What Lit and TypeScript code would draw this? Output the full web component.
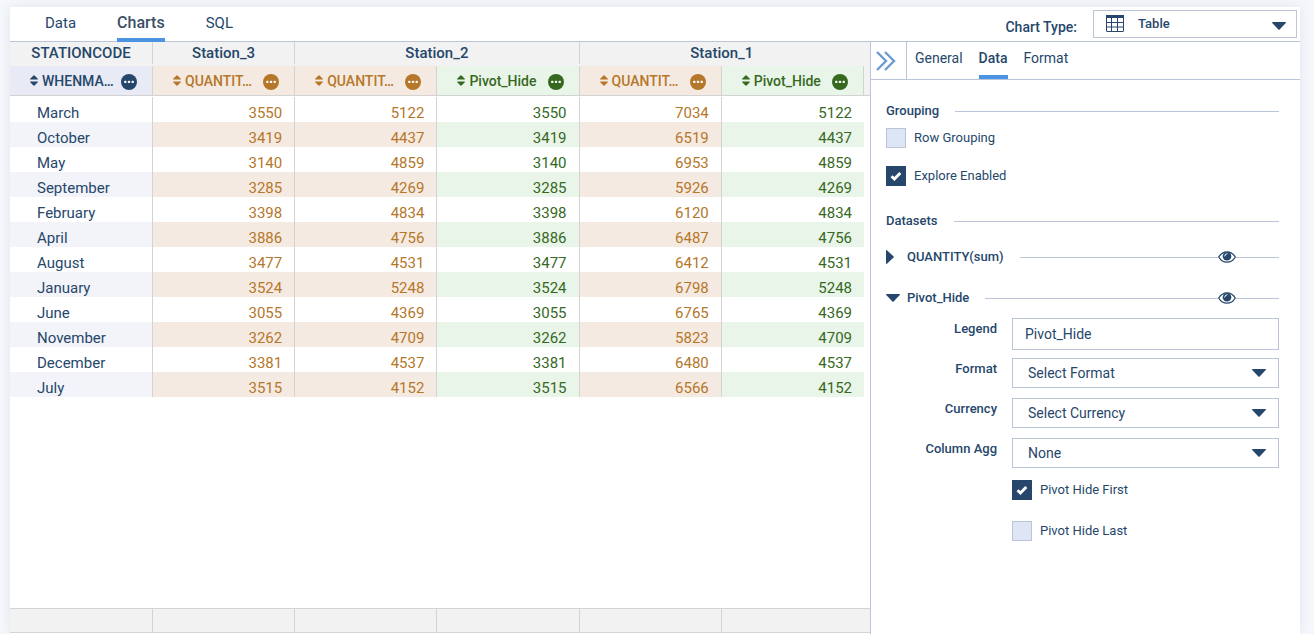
import { LitElement, html, svg, css } from "lit";
import { customElement } from "lit/decorators.js";
import { classMap } from "lit/directives/class-map.js";

type Tone = "navy" | "orange" | "green";

const columns: { label: string; tone: Tone }[] = [
  { label: "WHENMA…", tone: "navy" },
  { label: "QUANTIT…", tone: "orange" },
  { label: "QUANTIT…", tone: "orange" },
  { label: "Pivot_Hide", tone: "green" },
  { label: "QUANTIT…", tone: "orange" },
  { label: "Pivot_Hide", tone: "green" },
];

const rows: [string, number, number, number][] = [
  ["March", 3550, 5122, 7034],
  ["October", 3419, 4437, 6519],
  ["May", 3140, 4859, 6953],
  ["September", 3285, 4269, 5926],
  ["February", 3398, 4834, 6120],
  ["April", 3886, 4756, 6487],
  ["August", 3477, 4531, 6412],
  ["January", 3524, 5248, 6798],
  ["June", 3055, 4369, 6765],
  ["November", 3262, 4709, 5823],
  ["December", 3381, 4537, 6480],
  ["July", 3515, 4152, 6566],
];

const caret = html`<svg class="caret" width="14" height="8" viewBox="0 0 14 8" aria-hidden="true">
  <path d="M.6 0h12.800c.5 0 .7.5.4.9L7.600 7.600a.8.8 0 0 1-1.200 0L.2.9C-.1.5.1 0 .6 0z" fill="currentColor" />
</svg>`;

const eye = html`<svg width="18" height="12" viewBox="0 0 18 12" aria-hidden="true">
  <path d="M.7 6C2.800 2.500 5.700.8 9 .8S15.200 2.500 17.300 6C15.200 9.500 12.300 11.200 9 11.200S2.800 9.500.7 6z" fill="#fff" stroke="currentColor" stroke-width="1.300" />
  <circle cx="9" cy="5.200" r="4.300" fill="currentColor" />
  <path d="M6.700 5a2.400 2.400 0 0 1 2.300-2.300" fill="none" stroke="#fff" stroke-width="1" stroke-linecap="round" />
</svg>`;

@customElement("app-root")
export class AppRoot extends LitElement {
  static styles = css`
    :host {
      display: block;
      height: 100vh;
      box-sizing: border-box;
      padding: 7px 14px 0 10px;
      overflow: hidden;
      background: #f5f7fb;
      color: #26476b;
      font: 13px/20px Roboto, "Liberation Sans", sans-serif;
    }
    *, *::before { box-sizing: border-box; }
    button, input, select {
      margin: 0;
      padding: 0;
      border: 0;
      border-radius: 0;
      background: none;
      color: inherit;
      font: inherit;
    }
    svg { display: block; flex: none; }
    .card {
      height: 100%;
      display: flex;
      flex-direction: column;
      background: #fff;
      box-shadow: 0 0 10px #dfe4ec;
    }
    .topbar {
      display: flex;
      justify-content: space-between;
      height: 35px;
      flex: none;
      padding: 0 3px 0 35px;
      border-bottom: 1px solid #bcc4da;
    }
    .tabs { display: flex; gap: 41px; }
    .tab {
      padding-bottom: 4px;
      font-size: 15px;
      line-height: 30px;
      border-bottom: 4px solid transparent;
    }
    .tabs .tab { height: 35px; padding: 0; line-height: 28px; }
    .tab.on { font-weight: 500; border-color: #4a94e2; }
    .tabs .on { color: #3c4f66; font-size: 16px; }
    .type { display: flex; gap: 16px; padding-top: 3px; }
    .type-label { padding-top: 7px; font-size: 14px; font-weight: 500; }
    .picker { display: grid; align-items: center; border: 1px solid #bcc4da; }
    .picker > * { grid-area: 1 / 1; }
    .picker select {
      width: 100%;
      height: 28px;
      padding: 0 32px 0 15px;
      appearance: none;
      font-size: 14px;
    }
    .picker .caret { justify-self: end; margin-right: 12px; pointer-events: none; }
    .type .picker { width: 204px; height: 28px; }
    .type select { height: 26px; padding-left: 44px; font-size: 13px; font-weight: 500; }
    .type .grid-icon { margin: 0 0 2px 12px; pointer-events: none; }
    .type .caret { margin: 4px 10px 0 0; }
    .body { flex: 1; min-height: 0; display: flex; }
    .sheet { flex: 1; min-width: 0; display: flex; flex-direction: column; padding-bottom: 1px; }
    table { width: 100%; table-layout: fixed; border-collapse: separate; border-spacing: 0; }
    th, td { padding: 0; font-weight: 400; }
    .first { width: 143px; }
    .edge { width: 6px; }
    .group { height: 24px; padding-bottom: 2px; background: #f2f2f2; }
    .group span {
      display: block;
      height: 22px;
      border-right: 1px solid #d3d3d3;
      font-size: 15px;
      font-weight: 500;
      line-height: 22px;
    }
    .group.last span { border: 0; }
    .rail { background: #f2f2f2; }
    .rail.low { border-bottom: 1px solid #d3d3d3; }
    .field { height: 30px; border-right: 1px solid #d3d3d3; border-bottom: 1px solid #d3d3d3; }
    .field-in { display: flex; align-items: center; padding: 0 15px 0 20px; }
    .name { flex: 1; padding-left: 4px; text-align: left; font-size: 14px; font-weight: 500; white-space: nowrap; }
    .more { margin-top: 3px; }
    .navy { color: #26476b; }
    .orange { color: #b5772a; }
    .green { color: #36691f; }
    .field.navy { background: #e8ebf5; }
    .field.orange { background: #f5eae1; }
    .field.green { background: #eaf5e9; }
    .gap td { height: 1px; }
    .cell {
      height: 25px;
      padding: 7px 12px 0 0;
      border-right: 1px solid #d3d3d3;
      text-align: right;
      font-size: 15px;
      line-height: 18px;
    }
    .cell.navy { padding: 7px 0 0 27px; text-align: left; }
    .cell.end { border: 0; }
    tr:nth-child(odd) > .cell.navy { background: #f2f4f9; }
    tr:nth-child(odd) > .cell.orange { background: #f5eae1; }
    tr:nth-child(odd) > .cell.green { background: #eaf5e9; }
    .totals {
      display: grid;
      grid-template-columns: 143px repeat(5, 1fr);
      margin-top: auto;
      height: 25px;
      padding-right: 6px;
      background: #f2f2f2;
      border: solid #d3d3d3;
      border-width: 1px 0;
    }
    .totals span { border-right: 1px solid #d3d3d3; }
    .totals span:last-child { border: 0; }
    .panel { flex: 0 0 430px; border-left: 1px solid #bcc4da; }
    .panel-head { display: flex; height: 38px; border-bottom: 1px solid #bcc4da; }
    .collapse { width: 36px; padding-left: 5px; border-right: 1px solid #bcc4da; color: #6c9bd0; }
    .subtabs { display: flex; gap: 16px; padding-left: 8px; }
    .subtabs .tab { height: 37px; padding: 0 0 1px; font-size: 14px; line-height: 32px; }
    .subtabs .tab.on { color: #26476b; }
    .content { padding: 21px 21px 0 15px; }
    .heading { display: flex; align-items: center; gap: 16px; margin: 0; font: inherit; font-weight: 500; }
    .heading::after { content: ""; flex: 1; height: 1px; background: #bcc4da; }
    .check { display: flex; align-items: center; gap: 8px; height: 20px; }
    .check input {
      width: 20px;
      height: 20px;
      appearance: none;
      background: #dee5f5;
      border: 1px solid #bcc4da;
    }
    .box { display: grid; place-items: center; }
    .box > * { grid-area: 1 / 1; }
    .box svg { pointer-events: none; }
    .check input:checked { background: #26476b; border-color: #26476b; }
    .options { display: grid; gap: 18px; padding: 7px 0 25px; }
    .dataset { display: flex; align-items: center; font-weight: 500; height: 20px; }
    .toggle { display: flex; align-items: center; font-weight: 500; }
    .arrow { width: 21px; }
    .rule { height: 1px; background: #bcc4da; }
    .rule.lead { flex: 1; margin-left: 16px; }
    .rule.tail { width: 43px; }
    .datasets { display: grid; gap: 21px; padding-top: 16px; }
    .form { display: grid; grid-template-columns: 111px 1fr; gap: 8px 15px; padding-top: 10px; }
    .form > label:not(.check) { padding-top: 1px; text-align: right; font-weight: 500; }
    .form input[type="text"] {
      width: 100%;
      height: 32px;
      padding: 0 12px;
      border: 1px solid #bcc4da;
      font-size: 14px;
    }
    .form .picker { height: 30px; margin-bottom: 2px; }
    .form .check { grid-column: 2; margin: 2px 0 11px; }
  `;

  private check(label: string, checked: boolean) {
    return html`<label class="check">
      <span class="box">
        <input type="checkbox" .checked=${checked} />
        ${checked
          ? html`<svg width="12" height="10" viewBox="0 0 12 10" aria-hidden="true">
              <path d="M1.500 5.300 4.400 8 10.300 2" fill="none" stroke="#fff" stroke-width="2.900" />
            </svg>`
          : null}
      </span>
      ${label}
    </label>`;
  }

  private select(id: string, label: string, value: string) {
    return html`<label for=${id}>${label}</label>
      <div class="picker">
        <select id=${id}><option>${value}</option></select>
        ${caret}
      </div>`;
  }

  private dataset(name: string, open: boolean) {
    return html`<div class="dataset">
      <button class="toggle" aria-expanded=${open}>
        <span class="arrow">
          ${open
            ? caret
            : html`<svg width="8" height="14" viewBox="0 0 8 14" aria-hidden="true">
                <path d="M0 .6v12.800c0 .5.5.7.9.4l6.700-6.200a.8.8 0 0 0 0-1.200L.9.2C.5-.1 0 .1 0 .6z" fill="currentColor" />
              </svg>`}
        </span>
        ${name}
      </button>
      <span class="rule lead"></span>
      <button aria-label="Toggle visibility">${eye}</button>
      <span class="rule tail"></span>
    </div>`;
  }

  private header(label: string, tone: Tone) {
    return html`<th scope="col" class="field ${tone}">
      <div class="field-in">
        <svg width="8" height="11" viewBox="0 0 8 11" aria-hidden="true">
          <path d="M.6 4.600h6.800c.5 0 .7-.5.4-.8L4.500.4a.7.7 0 0 0-1 0L.2 3.800c-.3.300-.1.8.4.8zM.6 6.400h6.800c.5 0 .7.5.4.8L4.500 10.600a.7.7 0 0 1-1 0L.2 7.200c-.3-.300-.1-.8.4-.8z" fill="currentColor" />
        </svg>
        <span class="name">${label}</span>
        <button class="more" aria-label="Column options">
          <svg width="16" height="16" viewBox="0 0 16 16" aria-hidden="true">
            <circle cx="8" cy="8" r="8" fill="currentColor" />
            ${[4.3, 8, 11.7].map((x) => svg`<rect x=${x - 1.2} y="6.700" width="2.400" height="2.400" rx=".8" fill="#fff" />`)}
          </svg>
        </button>
      </div>
    </th>`;
  }

  private table() {
    return html`<table>
      <colgroup><col class="first" /><col span="5" /><col class="edge" /></colgroup>
      <thead>
        <tr>
          <th class="group"><span>STATIONCODE</span></th>
          <th class="group"><span>Station_3</span></th>
          <th class="group" colspan="2"><span>Station_2</span></th>
          <th class="group last" colspan="2"><span>Station_1</span></th>
          <td class="rail"></td>
        </tr>
        <tr>
          ${columns.map((c) => this.header(c.label, c.tone))}
          <td class="rail low"></td>
        </tr>
      </thead>
      <tbody>
        <tr class="gap"><td colspan="7"></td></tr>
        ${rows.map(([month, a, b, c]) => {
          const values = [month, a, b, a, c, b];
          return html`<tr>
            ${values.map(
              (v, i) => html`<td class=${classMap({ cell: true, [columns[i].tone]: true, end: i === 5 })}>${v}</td>`
            )}
          </tr>`;
        })}
      </tbody>
    </table>`;
  }

  render() {
    return html`<main class="card">
      <header class="topbar">
        <nav class="tabs">
          <button class="tab">Data</button>
          <button class="tab on">Charts</button>
          <button class="tab">SQL</button>
        </nav>
        <div class="type">
          <label class="type-label" for="type">Chart Type:</label>
          <div class="picker">
            <select id="type"><option>Table</option></select>
            <svg class="grid-icon" width="18" height="17" viewBox="0 0 18 17" aria-hidden="true">
              <rect x=".5" y=".5" width="17" height="16" rx=".5" fill="#fff" stroke="currentColor" />
              <path d="M0 0h18v3H0z" fill="currentColor" />
              <path d="M5.500 3v14M11.500 3v14M0 7.500h18M0 12h18" stroke="currentColor" />
            </svg>
            ${caret}
          </div>
        </div>
      </header>
      <div class="body">
        <section class="sheet">
          ${this.table()}
          <div class="totals">${columns.map(() => html`<span></span>`)}</div>
        </section>
        <aside class="panel">
          <div class="panel-head">
            <button class="collapse" aria-label="Collapse panel">
              <svg width="20" height="20" viewBox="0 0 20 20" aria-hidden="true">
                <path d="M1 1l9 9-9 9M9 1l9 9-9 9" fill="none" stroke="currentColor" stroke-width="2.400" />
              </svg>
            </button>
            <nav class="subtabs">
              <button class="tab">General</button>
              <button class="tab on">Data</button>
              <button class="tab">Format</button>
            </nav>
          </div>
          <div class="content">
            <h2 class="heading">Grouping</h2>
            <div class="options">
              ${this.check("Row Grouping", false)} ${this.check("Explore Enabled", true)}
            </div>
            <h2 class="heading">Datasets</h2>
            <div class="datasets">
              ${this.dataset("QUANTITY(sum)", false)} ${this.dataset("Pivot_Hide", true)}
            </div>
            <div class="form">
              <label for="legend">Legend</label>
              <input id="legend" type="text" .value=${"Pivot_Hide"} />
              ${this.select("format", "Format", "Select Format")}
              ${this.select("currency", "Currency", "Select Currency")}
              ${this.select("agg", "Column Agg", "None")}
              ${this.check("Pivot Hide First", true)} ${this.check("Pivot Hide Last", false)}
            </div>
          </div>
        </aside>
      </div>
    </main>`;
  }
}
